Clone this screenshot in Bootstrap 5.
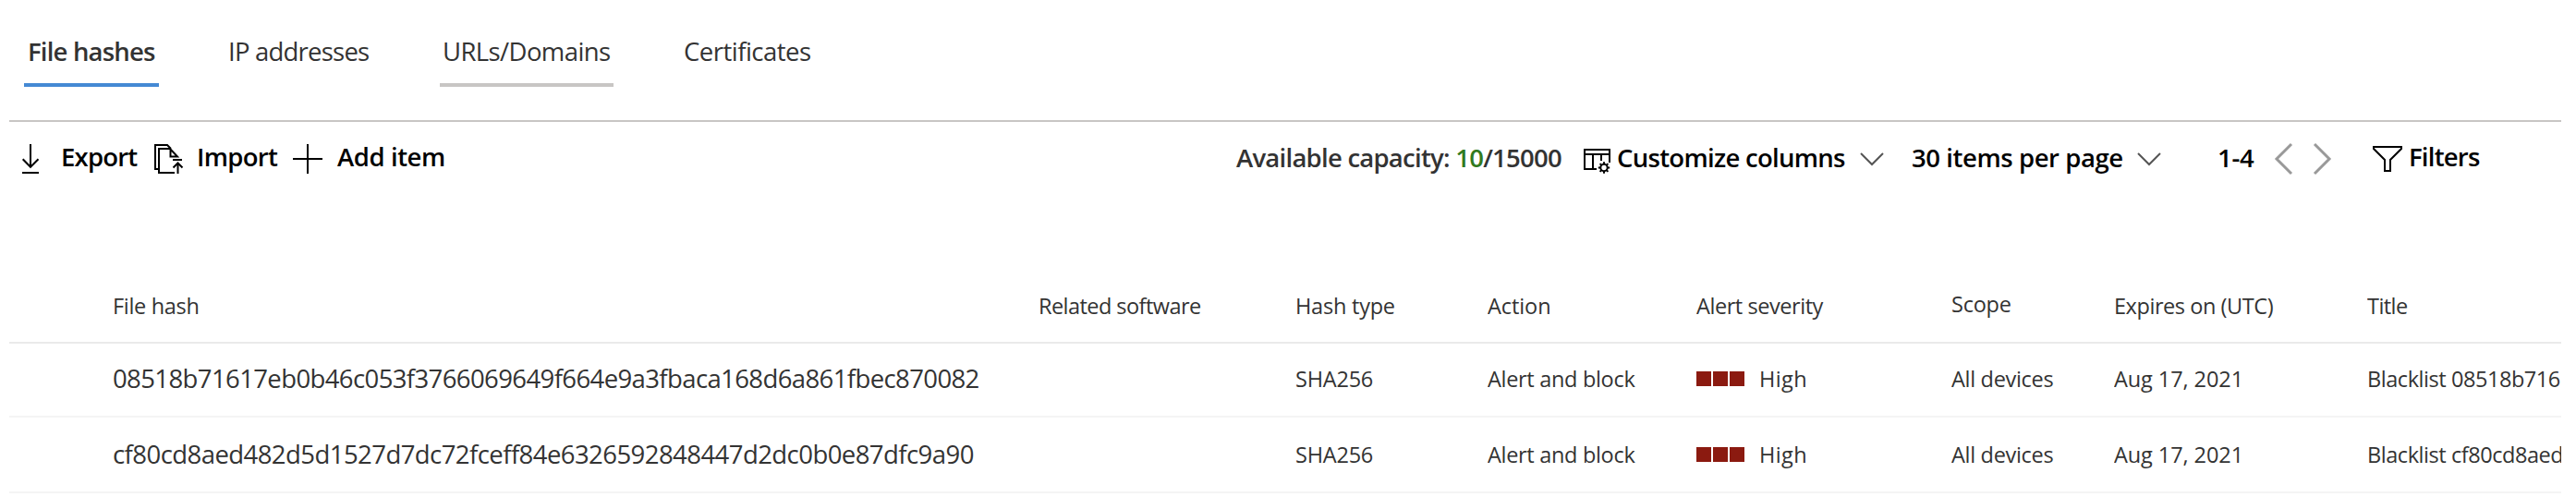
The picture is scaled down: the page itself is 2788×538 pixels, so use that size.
<!DOCTYPE html>
<html lang="en">
<head>
<meta charset="utf-8">
<title>Indicators</title>
<link href="https://cdn.jsdelivr.net/npm/bootstrap@5.3.0/dist/css/bootstrap.min.css" rel="stylesheet">
<script src="https://cdn.jsdelivr.net/npm/bootstrap@5.3.0/dist/js/bootstrap.bundle.min.js"></script>
<style>
body{font-family:"Open Sans","Segoe UI",sans-serif;font-size:27.5px;line-height:40px;color:#333;background:#fff}
.page{padding:0 16px 0 10px;height:538px;overflow:hidden}
.tabs{padding:36px 0 0 16px;height:132px;border-bottom:2px solid #c8c6c4}
.tabs .nav-link{padding:0 0 14px 4px;color:#333;height:58px;border-bottom:4px solid transparent;white-space:nowrap}
.tabs .active{font-weight:600;border-color:#4489d4}
.tabs .hovered{border-color:#c8c6c4}
.t-file{width:146px;margin-right:71px;letter-spacing:-.81px}
.t-ip{width:158px;margin-right:75px;letter-spacing:-.78px}
.tabs .t-url{width:188px;margin-right:72px;padding-left:3px;letter-spacing:-.6px}
.t-cert{width:144px;letter-spacing:-.51px}
.toolbar{display:grid;height:108px;padding:17px 0 0 14px;color:#000;font-weight:600;white-space:nowrap;align-items:start;
grid-template-columns:42px 101px 46px 104px 48px 973px 376px 36px 263px 56px 244px 87px 62px 42px 64px 39px 1fr}
.toolbar svg{display:block;fill:none;stroke:#000;stroke-width:2;margin-top:7px;overflow:visible}
.toolbar span{padding-top:1px}
.toolbar .low{padding-top:2px}
.toolbar .capacity{color:#333;letter-spacing:-.75px}
.toolbar .chev{stroke:#555}
.toolbar .pager{stroke:#999;stroke-width:3}
.used{color:#317a1e}
.k4{letter-spacing:-.42px}.k7{letter-spacing:-.68px}.k77{letter-spacing:-.7px}.k8{letter-spacing:-.78px}.k3{letter-spacing:-.29px}
.grid-table{table-layout:fixed;width:2762px;border-collapse:separate;border-spacing:0;font-size:23.5px;line-height:32px;white-space:nowrap}
.grid-table th{height:132px;padding:0 0 23px;font-weight:400;vertical-align:bottom;border-bottom:2px solid #eaeaea;overflow:hidden}
.grid-table th.raised{padding-bottom:25px}
.grid-table td{height:80px;padding:22px 0 0;vertical-align:top;border-bottom:2px solid #f4f4f4;overflow:hidden}
.grid-table tr+tr td{height:82px;padding-top:24px}
.grid-table .hash{font-size:27.5px}
.h1x{letter-spacing:-.61px}.h2x{letter-spacing:-.56px}
.c3{letter-spacing:-.31px}.c55{letter-spacing:-.55px}.c2{letter-spacing:-.22px}.c1{letter-spacing:-.08px}.c45{letter-spacing:-.44px}
.level{width:16px;height:16px;background:#8b1a10;margin-right:2px}
.level-name{margin-left:14px;letter-spacing:.4px}
</style>
</head>
<body>
<main class="page">
<nav class="nav tabs flex-nowrap">
<a class="nav-link active t-file">File hashes</a>
<a class="nav-link t-ip">IP addresses</a>
<a class="nav-link hovered t-url">URLs/Domains</a>
<a class="nav-link t-cert">Certificates</a>
</nav>
<div class="toolbar">
<svg width="20" height="32"><path d="M9 0v25M.7 16.2L9 24.8l8.500-8.600M0 31h18"/></svg>
<span class="k8">Export</span>
<svg width="32" height="32"><path d="M5 27H1V1h13l4 4M22 31H5V5h12l8 8.500h-7.500V6M20 17h10M25.500 32V21M20.500 25.500l5-5 5 5"/></svg>
<span class="k7">Import</span>
<svg width="32" height="32"><path d="M16 0v32M0 16h32"/></svg>
<span class="k4">Add item</span>
<span class="low capacity">Available capacity: <span class="used">10</span>/15000</span>
<svg width="32" height="32"><path d="M14 27H1V6h27v14M1 11h27M10 11v16M19 11v7"/><circle cx="22" cy="25.500" r="3.700"/><path d="M26 25.500h2.200M24.830 28.330l1.550 1.550M22 29.500v2.200M19.170 28.330l-1.550 1.550M18 25.500h-2.200M19.170 22.670l-1.550-1.550M22 21.500v-2.200M24.830 22.670l1.550-1.550"/></svg>
<span class="low k77">Customize columns</span>
<svg class="chev" width="26" height="32"><path d="M1 10l12 12 12-12"/></svg>
<span class="low k4">30 items per page</span>
<svg class="chev" width="26" height="32"><path d="M1 10l12 12 12-12"/></svg>
<span class="low k3">1-4</span>
<svg class="pager" width="20" height="34"><path d="M18 0L2 16l16 16"/></svg>
<svg class="pager" width="20" height="34"><path d="M1 0l16 16L1 32"/></svg>
<svg width="32" height="32"><path d="M1 3h30v2L19 17v12h-6V17L1 5z"/></svg>
<span class="k8">Filters</span>
</div>
<table class="grid-table">
<colgroup><col style="width:112px"><col style="width:1002px"><col style="width:278px"><col style="width:208px"><col style="width:226px"><col style="width:276px"><col style="width:176px"><col style="width:274px"><col></colgroup>
<thead><tr><th></th><th class="c3">File hash</th><th class="c55">Related software</th><th class="c2">Hash type</th><th class="c1">Action</th><th class="c45">Alert severity</th><th class="c2 raised">Scope</th><th class="c45">Expires on (UTC)</th><th class="c55">Title</th></tr></thead>
<tbody>
<tr><td></td><td class="hash h1x">08518b71617eb0b46c053f3766069649f664e9a3fbaca168d6a861fbec870082</td><td></td><td class="c2">SHA256</td><td class="c3">Alert and block</td><td><div class="d-flex align-items-center"><i class="level"></i><i class="level"></i><i class="level"></i><span class="level-name">High</span></div></td><td class="c3">All devices</td><td class="c1">Aug 17, 2021</td><td class="c45">Blacklist 08518b716</td></tr>
<tr><td></td><td class="hash h2x">cf80cd8aed482d5d1527d7dc72fceff84e6326592848447d2dc0b0e87dfc9a90</td><td></td><td class="c2">SHA256</td><td class="c3">Alert and block</td><td><div class="d-flex align-items-center"><i class="level"></i><i class="level"></i><i class="level"></i><span class="level-name">High</span></div></td><td class="c3">All devices</td><td class="c1">Aug 17, 2021</td><td class="c45">Blacklist cf80cd8aed</td></tr>
</tbody>
</table>
</main>
</body>
</html>
